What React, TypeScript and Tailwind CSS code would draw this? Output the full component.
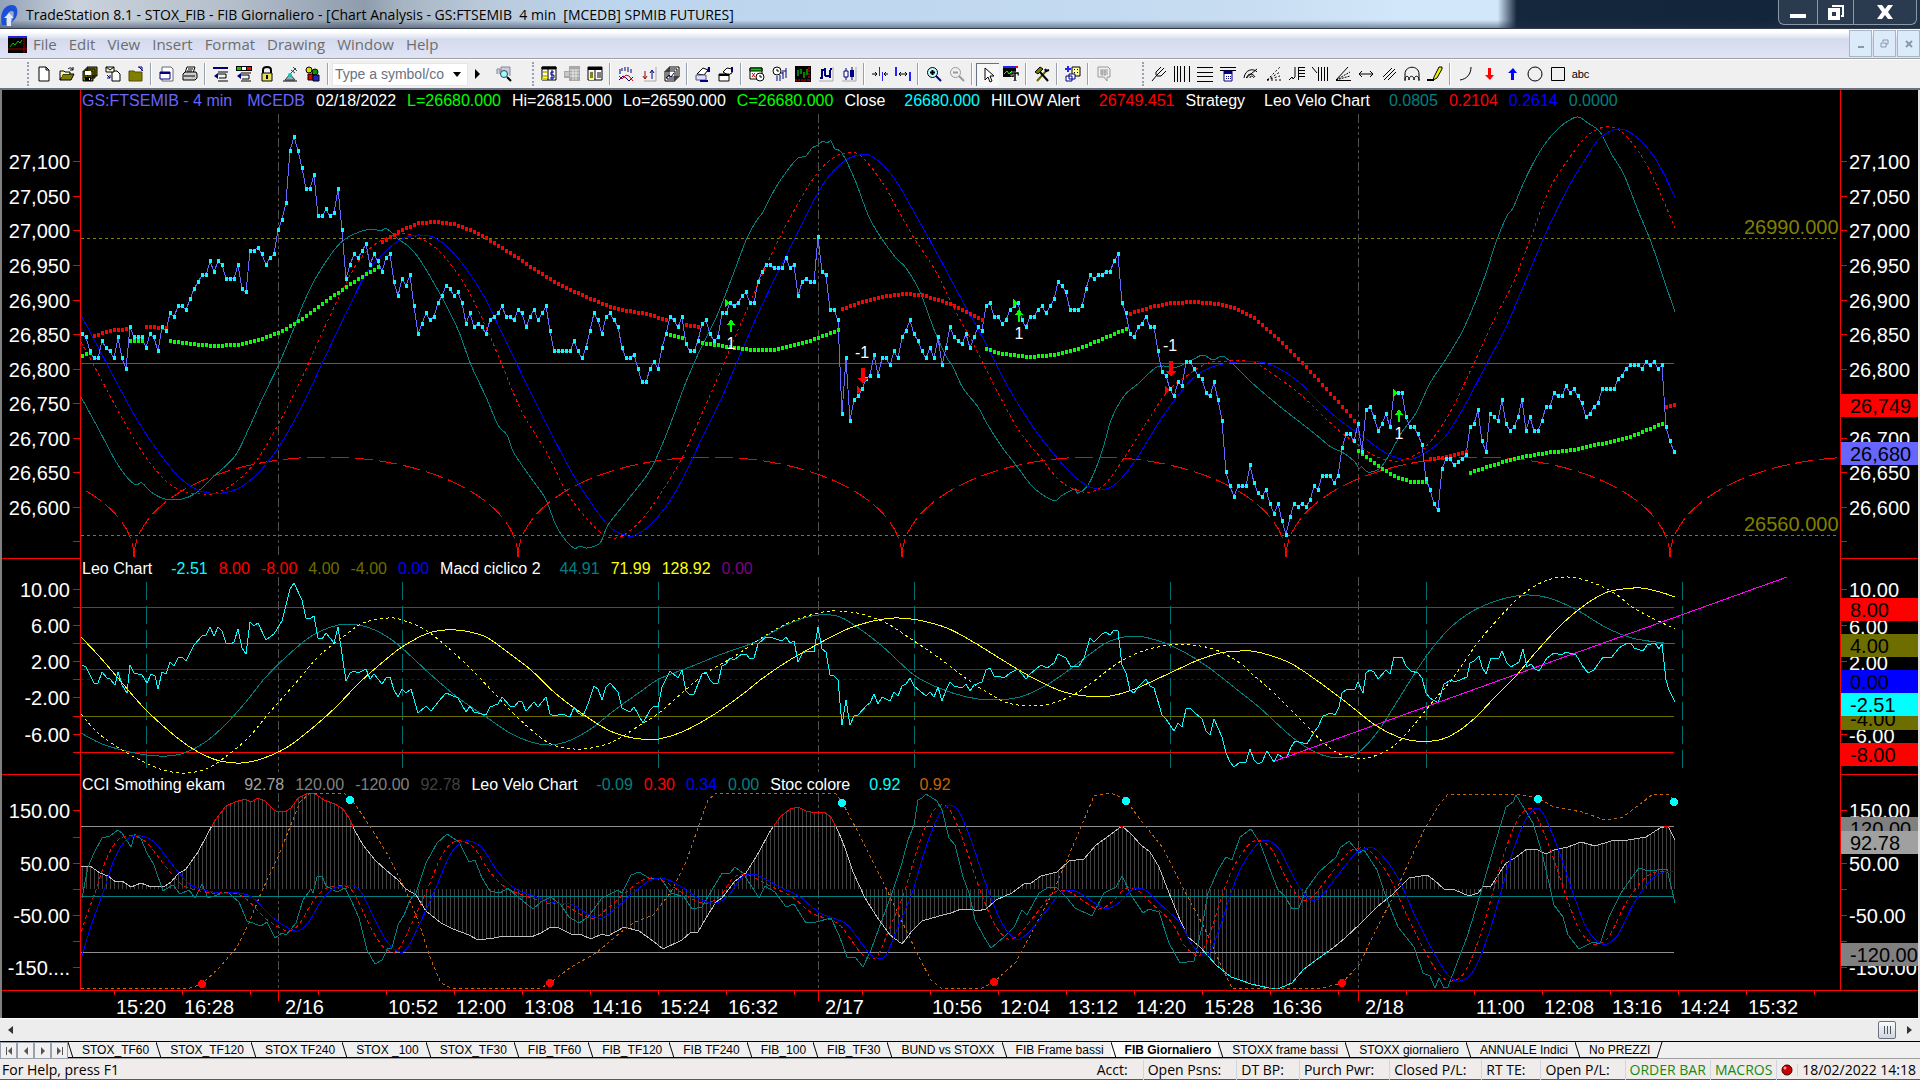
import type { ReactNode } from "react";

// ---------------------------------------------------------------- data

// closing prices, one per 4 minute bar, minus 26000
const closes = [
  850, 845, 825, 815, 815, 840, 830, 825, 815, 845,
  815, 800, 860, 845, 845, 845, 830, 850, 845, 825,
  860, 855, 880, 875, 890, 890, 885, 900, 915, 925,
  935, 935, 955, 940, 955, 950, 930, 930, 930, 950,
  915, 910, 970, 970, 975, 965, 950, 960, 965, 1000,
  1015, 1040, 1115, 1135, 1115, 1090, 1060, 1060, 1080, 1020,
  1020, 1030, 1020, 1025, 1060, 1000, 930, 950, 965, 960,
  970, 980, 950, 965, 955, 940, 960, 965, 925, 905,
  930, 920, 935, 890, 850, 865, 880, 870, 875, 895,
  905, 920, 915, 905, 910, 895, 865, 880, 860, 865,
  860, 850, 870, 875, 880, 890, 875, 875, 870, 885,
  880, 860, 875, 885, 870, 880, 890, 855, 825, 825,
  825, 825, 825, 840, 825, 815, 830, 855, 880, 870,
  850, 875, 880, 870, 860, 830, 815, 815, 820, 800,
  780, 780, 800, 810, 800, 830, 850, 875, 870, 860,
  875, 835, 825, 825, 840, 865, 870, 850, 840, 845,
  880, 880, 895, 890, 895, 905, 910, 895, 895, 925,
  940, 950, 950, 945, 945, 945, 960, 945, 950, 905,
  925, 930, 925, 925, 990, 940, 935, 885, 885, 870,
  735, 815, 725, 755, 760, 770, 785, 790, 820, 790,
  815, 815, 805, 825, 815, 845, 855, 870, 850, 840,
  825, 815, 830, 815, 845, 805, 830, 860, 845, 840,
  835, 850, 830, 845, 860, 855, 890, 895, 875, 875,
  865, 870, 885, 890, 895, 870, 860, 875, 875, 885,
  890, 880, 890, 900, 925, 920, 910, 885, 885, 885,
  890, 915, 935, 930, 935, 935, 940, 940, 955, 965,
  895, 880, 850, 845, 860, 865, 875, 860, 860, 825,
  795, 790, 770, 760, 780, 775, 810, 810, 800, 790,
  785, 765, 760, 780, 755, 725, 650, 630, 615, 630,
  630, 630, 660, 635, 620, 615, 625, 605, 590, 605,
  580, 560, 585, 605, 600, 605, 600, 610, 630, 625,
  645, 645, 645, 635, 645, 685, 705, 705, 695, 720,
  680, 740, 745, 730, 710, 720, 735, 715, 765, 765,
  765, 730, 715, 715, 705, 690, 640, 625, 605, 595,
  655, 670, 670, 660, 665, 670, 675, 715, 720, 740,
  695, 680, 735, 730, 725, 755, 720, 710, 715, 730,
  755, 710, 730, 710, 710, 725, 745, 745, 765, 760,
  760, 775, 765, 770, 760, 750, 730, 735, 745, 750,
  770, 770, 770, 770, 785, 790, 800, 805, 805, 805,
  800, 810, 805, 810, 800, 805, 715, 695, 680,
];

const hilowRed = [
  "91,337 108,331 127,329",
  "146,327 167,328",
  "382,242 402,230 418,223 435,222 453,224 469,230 486,238 510,253 535,270 559,285 584,296 608,306 622,310 645,314 667,320",
  "684,325 700,327",
  "842,309 865,301 886,296 902,294 922,295 947,303 967,312 983,320",
  "1129,314 1151,307 1171,303 1196,302 1220,304 1239,310 1255,319 1278,339 1301,362 1324,387 1343,408 1356,423",
  "1430,459 1448,457 1468,451",
  "1665,407 1676,404",
];

const hilowGreen = [
  "81,356 90,353",
  "129,341 144,341",
  "169,341 190,344 214,346 237,345 261,339 282,331 302,319 322,304 343,289 363,276 380,266",
  "669,335 684,338",
  "701,343 722,346 751,350 775,350 800,344 820,337 841,329",
  "986,349 1002,354 1029,357 1053,355 1078,349 1102,339 1128,328",
  "1358,451 1368,459 1382,469 1398,478 1411,482 1428,482",
  "1469,473 1490,466 1517,458 1545,453 1572,450 1600,444 1632,436 1664,423",
];

const velo = {
  fast:
    "81,397 98,428 118,465 134,484 142,483 151,492 165,499 182,499 196,493 212,478 235,456 249,428 263,397 278,366 292,333 304,302 318,274 335,249 345,239 359,232 373,229 380,231 387,229 398,239 408,246 418,257 431,278 445,303 459,332 471,365 486,397 498,425 507,435 514,453 531,478 545,498 555,523 563,537 574,548 580,546 587,548 600,543 608,525 626,502 649,472 662,445 673,417 686,382 700,350 716,318 731,280 747,238 757,220 763,212 776,187 790,167 798,158 806,156 812,148 818,145 823,141 827,143 831,141 835,149 842,153 855,180 869,217 882,239 896,258 906,268 920,292 935,332 947,358 953,367 963,388 978,407 986,422 1002,447 1016,465 1031,485 1043,495 1055,501 1061,496 1075,489 1078,493 1088,485 1098,463 1106,438 1111,420 1124,396 1139,383 1155,368 1163,366 1177,367 1192,360 1203,355 1213,360 1222,356 1231,362 1251,382 1278,405 1310,430 1331,447 1342,452 1354,461 1359,468 1362,467 1368,472 1379,469 1388,457 1402,432 1416,413 1430,383 1444,362 1462,332 1476,300 1487,270 1496,242 1507,216 1513,208 1524,182 1536,158 1547,141 1559,128 1568,121 1578,117 1588,123 1600,132 1611,153 1624,175 1639,213 1651,242 1664,280 1675,312",
  mid:
    "81,342 92,362 122,418 143,453 163,478 180,490 200,494 216,493 237,481 257,460 278,425 300,382 322,333 345,285 361,258 380,241 402,234 420,238 441,253 465,285 486,327 502,365 522,412 547,453 567,493 588,520 604,535 616,538 627,533 643,518 661,493 682,458 700,418 718,377 739,328 759,282 775,247 796,207 816,175 833,158 847,153 861,156 882,182 898,210 914,238 935,270 955,310 975,347 998,393 1020,432 1041,458 1057,478 1073,489 1090,492 1106,483 1126,455 1147,422 1167,392 1188,375 1208,363 1229,361 1253,362 1274,375 1301,395 1324,417 1342,433 1361,447 1377,457 1398,461 1418,453 1434,437 1453,407 1474,363 1494,320 1513,283 1531,237 1549,190 1568,160 1586,137 1605,127 1623,133 1644,160 1660,193 1675,228",
  slow:
    "81,315 98,347 118,385 139,423 163,458 180,478 200,491 222,493 241,487 261,470 282,442 304,402 326,355 351,303 367,272 384,253 400,240 418,235 437,239 457,257 482,293 502,333 526,383 551,433 575,478 596,510 612,529 628,536 635,535 647,528 665,508 682,480 702,438 722,397 743,348 763,303 784,260 808,212 824,183 843,162 859,155 873,157 894,178 914,212 939,257 963,302 984,340 1008,387 1033,427 1053,453 1073,475 1090,487 1106,489 1120,480 1139,455 1159,422 1180,393 1196,376 1212,367 1237,362 1260,362 1278,368 1299,382 1319,402 1342,422 1361,435 1384,452 1407,460 1425,453 1444,438 1464,407 1485,367 1506,327 1526,280 1545,235 1568,188 1586,158 1600,138 1618,129 1634,135 1655,158 1675,197",
};

const leo =
  "82,665 86,667 94,683 98,683 102,672 107,678 110,679 115,685 118,672 122,685 127,693 130,665 134,673 142,675 147,683 151,674 155,676 158,689 162,672 166,674 170,662 174,666 178,658 182,657 186,661 194,645 202,636 206,635 210,627 214,636 218,627 222,631 226,643 231,644 234,642 238,629 242,648 246,654 250,622 254,626 258,623 266,640 274,634 282,621 286,605 290,589 294,583 302,600 306,618 310,619 314,616 318,638 322,639 326,633 334,643 338,627 346,681 350,673 354,671 358,673 366,669 370,679 374,674 382,684 386,678 390,677 394,690 398,697 402,689 406,693 411,689 418,713 426,706 431,711 439,701 446,693 458,698 466,712 470,706 474,712 486,715 490,707 498,704 502,697 510,706 514,707 519,701 522,702 526,711 534,702 538,707 546,697 550,714 554,716 562,714 570,717 574,707 578,713 583,716 588,704 594,686 598,689 602,700 606,687 610,683 618,692 622,708 630,712 634,707 643,723 650,710 654,706 658,707 662,687 670,671 678,678 682,670 686,691 690,695 694,694 702,674 706,672 710,680 714,684 718,683 722,666 726,664 730,658 734,660 742,654 746,654 750,659 754,658 758,644 766,637 770,637 782,641 786,637 790,643 794,641 798,662 802,654 806,651 814,652 818,627 822,649 826,652 830,675 834,676 838,680 842,725 846,700 850,725 854,716 858,715 867,705 870,703 874,694 878,704 882,697 890,701 894,692 898,696 902,686 906,684 910,678 914,686 926,696 930,692 934,697 938,687 942,701 946,690 950,682 954,686 962,688 966,684 970,691 974,685 982,682 986,670 990,668 994,676 998,676 1004,678 1010,673 1018,669 1026,679 1030,674 1041,665 1047,668 1054,663 1058,654 1066,658 1071,667 1079,666 1084,658 1090,638 1094,642 1102,634 1106,632 1110,635 1114,630 1118,631 1122,665 1126,673 1130,690 1134,693 1138,687 1146,679 1150,686 1154,688 1162,715 1166,719 1174,731 1178,723 1182,727 1186,709 1190,708 1194,712 1202,719 1206,731 1210,735 1214,719 1218,728 1222,737 1226,753 1230,762 1234,767 1240,762 1246,762 1250,749 1254,760 1258,764 1262,762 1267,751 1274,762 1278,754 1282,757 1287,757 1291,747 1295,741 1307,744 1314,732 1318,727 1323,716 1331,713 1335,715 1339,707 1342,693 1347,689 1355,689 1358,682 1363,693 1366,673 1370,670 1374,672 1378,679 1386,670 1390,674 1394,657 1402,657 1406,666 1411,671 1418,673 1422,678 1426,693 1430,698 1438,703 1444,684 1451,680 1455,682 1467,677 1470,663 1474,661 1479,656 1482,667 1486,674 1491,658 1499,658 1502,651 1507,663 1511,667 1519,662 1523,649 1527,667 1531,664 1535,669 1539,671 1547,658 1554,653 1562,655 1566,652 1576,655 1582,665 1588,673 1594,670 1603,657 1611,658 1619,648 1627,643 1631,643 1634,648 1643,651 1647,645 1655,643 1659,649 1662,644 1666,680 1669,690 1675,702";

const macd = {
  teal:
    "81,733 102,744 126,751 146,755 167,756 184,753 204,743 224,726 245,703 265,678 286,657 310,637 331,627 347,624 367,627 386,636 402,648 429,673 457,697 486,717 510,733 531,742 551,745 571,740 592,728 616,709 640,692 659,679 690,667 722,654 755,642 784,626 812,616 837,616 857,627 882,646 914,675 939,688 967,697 992,700 1020,697 1045,686 1069,670 1090,654 1110,641 1135,636 1159,641 1184,652 1208,667 1240,692 1260,708 1292,737 1315,752 1338,758 1359,752 1379,730 1398,700 1425,658 1448,630 1471,612 1499,600 1526,595 1549,598 1577,610 1605,627 1632,638 1664,643 1675,644",
  dashed:
    "81,714 98,733 122,750 146,763 167,771 188,773 208,768 228,755 249,737 269,713 294,685 318,657 343,637 363,623 388,618 402,620 424,629 445,645 469,667 494,693 518,718 547,742 567,748 584,749 604,745 620,738 640,725 659,713 682,693 706,673 735,656 763,637 788,623 818,613 839,611 861,614 886,623 914,641 939,658 967,679 988,693 1008,703 1033,706 1053,703 1073,695 1094,681 1118,663 1143,651 1170,645 1192,645 1216,650 1240,663 1251,673 1274,693 1301,720 1324,743 1342,755 1365,758 1388,750 1407,733 1430,705 1453,678 1476,645 1499,618 1522,595 1545,581 1568,577 1591,582 1614,593 1637,610 1675,629",
  solid:
    "81,637 98,655 118,678 146,710 180,740 200,753 220,761 241,763 261,759 286,748 310,730 335,708 359,683 384,661 402,647 426,634 445,630 465,631 486,637 506,651 531,670 555,693 584,715 608,730 624,736 641,739 659,739 682,732 710,717 739,697 763,678 788,661 818,644 845,630 869,622 894,618 918,620 947,628 975,643 1004,661 1033,678 1061,691 1086,696 1110,696 1135,689 1170,673 1196,661 1220,653 1240,651 1251,651 1269,655 1292,664 1319,682 1347,703 1375,725 1398,737 1416,741 1439,740 1457,732 1476,717 1494,698 1515,677 1536,652 1559,627 1582,607 1605,593 1623,589 1641,588 1660,592 1675,597",
};

const cci =
  "81,866 90,866 100,873 108,876 116,882 122,881 131,887 141,883 151,887 165,886 171,882 178,874 186,869 198,852 206,837 214,822 226,806 235,802 245,799 251,802 258,798 265,801 274,810 278,812 286,811 291,808 298,798 306,794 314,793 324,800 335,804 343,809 349,818 355,831 363,845 375,860 386,870 398,880 406,889 416,895 426,911 441,923 453,929 469,935 478,940 494,938 504,936 531,937 541,933 551,927 559,928 571,934 582,935 591,939 602,934 608,936 624,927 639,931 653,941 663,949 682,940 690,933 698,932 706,918 716,902 722,898 735,881 746,873 759,852 769,833 780,817 790,809 798,807 806,811 816,813 824,812 831,817 839,833 845,848 853,872 865,898 877,917 890,935 902,944 912,931 922,921 939,916 951,913 961,909 971,909 977,911 986,909 996,900 1012,893 1024,884 1031,883 1041,876 1057,872 1069,861 1084,859 1096,845 1110,835 1122,826 1131,834 1141,845 1150,852 1159,867 1169,893 1180,920 1188,937 1200,947 1216,965 1231,977 1240,980 1251,984 1269,988 1280,988 1292,983 1303,970 1319,958 1333,948 1345,938 1361,923 1377,907 1393,894 1402,885 1409,878 1427,875 1434,880 1444,889 1455,890 1469,896 1478,893 1483,887 1491,886 1506,863 1515,858 1527,849 1538,850 1546,854 1554,850 1568,847 1581,842 1595,846 1611,841 1628,840 1646,837 1660,828 1668,826 1675,840";

const stoc =
  "81,988 190,988 202,984 220,967 237,947 249,923 261,893 278,857 290,827 300,802 310,793 345,794 355,804 371,828 388,855 404,887 418,920 431,960 441,983 451,988 541,988 550,983 571,967 596,953 620,933 633,923 653,915 671,892 686,862 698,828 708,800 716,793 835,793 842,802 857,830 877,870 898,913 918,955 931,980 941,988 982,988 994,982 1016,962 1033,930 1053,892 1069,855 1084,820 1094,796 1110,793 1124,798 1143,823 1163,848 1184,890 1204,927 1220,963 1232,988 1322,988 1342,983 1359,965 1375,932 1393,897 1409,862 1425,828 1439,805 1448,794 1517,794 1538,798 1554,807 1582,812 1605,820 1623,817 1639,805 1653,794 1668,794 1675,802";

const velo2 = {
  fast:
    "82,898 88,867 94,853 102,838 110,836 118,830 122,833 131,847 135,834 141,839 147,853 154,865 163,891 173,885 180,894 189,890 195,898 202,884 208,898 220,894 228,892 233,897 239,902 247,921 261,926 267,922 275,938 282,933 286,935 296,923 303,900 311,889 313,893 317,877 322,876 326,886 337,892 345,888 351,900 359,918 367,950 375,964 382,960 388,948 392,948 398,925 404,915 410,900 416,893 426,863 437,843 447,834 453,838 459,842 469,862 475,860 482,878 490,891 500,893 508,888 518,897 533,909 541,902 551,897 561,905 569,917 579,923 588,917 602,898 618,890 622,893 631,875 639,872 649,878 661,879 671,893 684,897 692,909 702,907 712,890 722,873 730,873 735,867 743,873 759,898 765,886 775,892 786,907 794,904 806,923 816,922 831,918 839,935 847,957 855,957 863,967 871,950 882,920 892,893 902,863 908,840 914,825 918,800 922,798 926,794 937,801 942,810 949,838 955,845 963,877 969,893 975,920 984,937 991,948 1004,937 1014,927 1022,910 1027,915 1039,893 1049,887 1057,888 1067,898 1075,908 1092,916 1104,893 1116,887 1122,876 1131,895 1143,913 1149,909 1159,912 1169,943 1180,963 1194,961 1202,927 1208,893 1218,870 1226,857 1232,860 1240,837 1251,829 1260,843 1269,867 1278,890 1285,896 1292,909 1299,908 1306,890 1319,872 1336,857 1340,848 1349,841 1359,853 1364,850 1377,870 1386,897 1398,927 1414,947 1423,973 1430,976 1435,988 1439,978 1444,988 1448,987 1457,963 1467,937 1480,895 1494,847 1506,807 1513,802 1516,795 1522,805 1533,823 1542,853 1554,905 1563,917 1568,935 1579,949 1593,942 1600,944 1609,917 1621,893 1630,880 1639,868 1648,871 1667,869 1675,903",
  slow:
    "81,959 92,923 104,890 114,860 126,840 141,836 155,843 171,863 188,883 200,889 220,893 239,893 253,898 273,918 290,929 298,931 308,923 322,900 335,888 353,886 363,895 375,920 388,943 400,952 408,947 420,923 435,890 449,857 459,844 469,841 482,848 498,872 514,888 531,895 555,903 571,904 588,914 602,918 616,908 633,893 649,881 661,878 673,882 686,890 702,900 716,903 729,895 741,878 753,874 763,878 780,887 800,897 820,913 845,923 857,937 869,953 877,958 886,955 898,927 912,893 926,847 939,815 949,805 959,812 971,840 988,890 1002,923 1016,939 1029,932 1047,910 1061,893 1075,891 1090,900 1106,909 1120,902 1133,889 1145,890 1159,903 1180,923 1192,945 1204,955 1210,952 1220,927 1231,893 1240,870 1251,852 1260,842 1269,841 1280,850 1294,878 1308,898 1319,898 1338,875 1356,853 1368,848 1379,852 1398,878 1416,918 1434,953 1448,975 1460,981 1474,970 1490,930 1508,867 1522,827 1533,810 1542,812 1556,843 1572,890 1586,927 1598,942 1607,944 1618,935 1634,903 1651,880 1664,872 1675,872",
};

// ---------------------------------------------------------------- helpers

const barX = (i: number) => 82 + i * 4;
const priceY = (p: number) => 161 + (1100 - p) * 0.692;

const parse = (s: string) => s.split(" ").map((p) => p.split(",").map(Number));

// smooth path through all points (Catmull-Rom)
const smooth = (s: string) => {
  const p = parse(s);
  let d = `M${p[0][0]} ${p[0][1]}`;
  for (let i = 0; i < p.length - 1; i++) {
    const a = p[i - 1] || p[i];
    const b = p[i];
    const c = p[i + 1];
    const e = p[i + 2] || c;
    d += `C${b[0] + (c[0] - a[0]) / 6} ${b[1] + (c[1] - a[1]) / 6} ${c[0] - (e[0] - b[0]) / 6} ${c[1] - (e[1] - b[1]) / 6} ${c[0]} ${c[1]}`;
  }
  return d;
};

const valueAt = (pts: number[][], x: number) => {
  const i = Math.max(1, pts.findIndex((p) => p[0] >= x));
  const [x0, y0] = pts[i - 1];
  const [x1, y1] = pts[i];
  return y0 + ((y1 - y0) * (x - x0)) / (x1 - x0);
};

// one small square per bar along a series
const squares = (s: string) => {
  const pts = parse(s);
  const end = pts[pts.length - 1][0];
  let d = "";
  for (let i = 0; barX(i) <= end; i++) {
    const x = barX(i);
    if (x >= pts[0][0]) d += `M${x - 1} ${Math.round(valueAt(pts, x)) - 2}h3v4h-3z`;
  }
  return d;
};

const cciPoints = parse(cci);
const dayLines = [278, 818, 1358];

const Line = ({ d, c, dash }: { d: string; c: string; dash?: string }) => (
  <path d={d} fill="none" stroke={c} strokeDasharray={dash} />
);

const DayLines = ({ from, to }: { from: number; to: number }) => (
  <>
    {dayLines.map((x) => (
      <Line key={x} d={`M${x + 0.5} ${from}V${to}`} c="#505050" dash="9 3 3 3 3 3" />
    ))}
  </>
);

type Tick = [number, string];

// price or value scale on both sides of a pane
const Scale = ({ left, right = left, top, bottom }: { left: Tick[]; right?: Tick[]; top: number; bottom: number }) => (
  <g>
    <path d={`M80.5 ${top}V${bottom}M1840.5 ${top}V${bottom}`} stroke="#f00" />
    {left.map(([y, t]) => (
      <g key={y}>
        <path d={`M73 ${y}H80M1841 ${y}H1847`} stroke="#f00" />
        {t && <text x="70" y={y + 7} textAnchor="end">{t}</text>}
      </g>
    ))}
    {right.map(([y, t]) => t && <text key={y} x="1849" y={y + 7}>{t}</text>)}
  </g>
);

const Tag = ({ y, c, children }: { y: number; c: string; children: ReactNode }) => (
  <g>
    <rect x="1841" y={y} width="77" height="23" fill={c} />
    <text x="1850" y={y + 19} fill="#000">{children}</text>
  </g>
);

const Pane = ({ top, height, legend, children }: { top: number; height: number; legend?: ReactNode; children: ReactNode }) => (
  <div className="relative">
    <svg viewBox={`2 ${top} 1916 ${height}`} shapeRendering="crispEdges" className="block w-full h-auto fill-white text-[20px]">
      {children}
    </svg>
    {legend && (
      <div className="absolute top-0 left-20 h-[21px] flex items-center gap-[11px] text-base leading-5 whitespace-pre text-white">{legend}</div>
    )}
  </div>
);

const Legend = ({ name, values = [] }: { name: string; values?: [string, string][] }) => (
  <>
    <span className="pr-2">{name}</span>
    {values.map(([v, c], i) => (
      <span key={i} className={c}>{v}</span>
    ))}
  </>
);

// ---------------------------------------------------------------- panes

const BuySignal = ({ x, y }: { x: number; y: number }) => (
  <g fill="#0f0">
    <path d={`M${x} ${y}l4 6h-3v7h-2v-7h-3z`} />
    <text x={x} y={y + 30} textAnchor="middle" className="text-base fill-white">1</text>
  </g>
);

const SellSignal = ({ x, y }: { x: number; y: number }) => (
  <g fill="#f00">
    <path d={`M${x - 2} ${y}h4v10h3l-5 6l-5 -6h3z`} />
    <text x={x - 8} y={y - 10} className="text-base fill-white">-1</text>
  </g>
);

const PricePane = () => {
  const ticks: Tick[] = [
    [161.5, "27,100"], [196.5, "27,050"], [230.5, "27,000"], [265.5, "26,950"], [300.5, "26,900"], [334.5, "26,850"],
    [369.5, "26,800"], [403.5, "26,750"], [438.5, "26,700"], [472.5, "26,650"], [507.5, "26,600"], [541.5, ""],
  ];
  return (
    <Pane
      top={90}
      height={468}
      legend={
        <>
          <span className="text-[#6666ff] pr-1">GS:FTSEMIB - 4 min</span>
          <span className="text-[#6666ff]">MCEDB</span>
          <span>02/18/2022</span>
          <span className="text-[#00ff00]">L=26680.000</span>
          <span>Hi=26815.000</span>
          <span>Lo=26590.000</span>
          <span className="text-[#00ff00]">C=26680.000</span>
          <Legend name="Close" values={[["26680.000", "text-[#00ffff]"]]} />
          <Legend name="HILOW Alert" values={[["26749.451", "text-[#ff0000]"]]} />
          <Legend name="Strategy" />
          <Legend
            name="Leo Velo Chart"
            values={[["0.0805", "text-[#008080]"], ["0.2104", "text-[#ff0000]"], ["0.2614", "text-[#0000ff]"], ["0.0000", "text-[#008080]"]]}
          />
        </>
      }
    >
      <clipPath id="price-plot"><rect x="81" y="90" width="1758" height="468" /></clipPath>
      <DayLines from={114} to={556} />
      <Line d="M81 238.5H1838M81 535.5H1838" c="#808000" dash="3 3" />
      <Line d="M81 363.5H1674" c="#008080" />
      <g clipPath="url(#price-plot)">
        {[-250, 134, 518, 902, 1286, 1670].map((x) => (
          <Line key={x} d={`M${x} 557A192 100 0 0 1 ${x + 384} 557`} c="#f00" dash="18 6" />
        ))}
      </g>
      <Line d={smooth(velo.fast)} c="#008080" />
      <Line d={smooth(velo.mid)} c="#f00" dash="3 3" />
      <Line d={smooth(velo.slow)} c="#00f" />
      <Line d={"M" + closes.map((p, i) => `${barX(i)} ${priceY(p)}`).join("L")} c="#6666ff" />
      {hilowRed.map((s) => <path key={s} d={squares(s)} fill="#f00" />)}
      {hilowGreen.map((s) => <path key={s} d={squares(s)} fill="#0f0" />)}
      {closes.map((p, i) => (
        <rect key={i} x={barX(i) - 1} y={Math.round(priceY(p)) - 2} width="3" height="4" fill="#0ff" />
      ))}
      <path d="M725 299v8l5 -4zM1013 299v8l5 -4zM1393 389v8l5 -4z" fill="#0f0" />
      <path d="M857 386v8l4 -4zM1165 386v8l4 -4z" fill="#f00" />
      <BuySignal x={731} y={319} />
      <BuySignal x={1019} y={309} />
      <BuySignal x={1399} y={409} />
      <SellSignal x={863} y={368} />
      <SellSignal x={1171} y={361} />
      <text x="1744" y="234" fill="#808000">26990.000</text>
      <text x="1744" y="531" fill="#808000">26560.000</text>
      <Scale left={ticks} top={90} bottom={558} />
      <Tag y={394} c="#f00">26,749</Tag>
      <Tag y={442} c="#6666ff">26,680</Tag>
    </Pane>
  );
};

const LeoPane = () => {
  const ticks: Tick[] = [
    [589.5, "10.00"], [607.5, ""], [625.5, "6.00"], [643.5, ""], [661.5, "2.00"], [679.5, ""],
    [697.5, "-2.00"], [716.5, ""], [734.5, "-6.00"], [752.5, ""],
  ];
  const right: Tick[] = [[589.5, "10.00"], [626.5, "6.00"], [662.5, "2.00"], [735.5, "-6.00"]];
  return (
    <Pane
      top={558}
      height={216}
      legend={
        <>
          <Legend
            name="Leo Chart"
            values={[
              ["-2.51", "text-[#00ffff]"], ["8.00", "text-[#ff0000]"], ["-8.00", "text-[#ff0000]"],
              ["4.00", "text-[#6e6e00]"], ["-4.00", "text-[#6e6e00]"], ["0.00", "text-[#0000ff]"],
            ]}
          />
          <Legend
            name="Macd ciclico 2"
            values={[["44.91", "text-[#008080]"], ["71.99", "text-[#ffff00]"], ["128.92", "text-[#ffff00]"], ["0.00", "text-[#800080]"]]}
          />
        </>
      }
    >
      <DayLines from={577} to={772} />
      {[146, 402, 658, 914, 1170, 1426, 1682].map((x) => (
        <Line key={x} d={`M${x + 0.5} 582V768`} c="#007070" dash="18 6" />
      ))}
      <Line d="M81 607.5H1674M81 752.5H1674" c="#f00" />
      <Line d="M81 643.5H1674M81 716.5H1674" c="#6e6e00" />
      <Line d="M81 669.5H1674" c="#900090" />
      <Line d="M81 679.5H1674" c="#00f" dash="3 3" />
      <Line d={smooth(macd.teal)} c="#008080" />
      <Line d={smooth(macd.dashed)} c="#ff0" dash="3 3" />
      <Line d={smooth(macd.solid)} c="#ff0" />
      <Line d={"M" + leo} c="#0ff" />
      <Line d="M1275 761L1787 577" c="#f0f" />
      <Scale left={ticks} right={right} top={558} bottom={774} />
      <Tag y={598} c="#f00">8.00</Tag>
      <Tag y={634} c="#6e6e00">4.00</Tag>
      <Tag y={707} c="#6e6e00">-4.00</Tag>
      <Tag y={670} c="#00f">0.00</Tag>
      <Tag y={693} c="#0ff">-2.51</Tag>
      <Tag y={743} c="#f00">-8.00</Tag>
      <path d="M2 558.5H80M1841 558.5H1918" stroke="#f00" />
    </Pane>
  );
};

const CciPane = () => {
  const left: Tick[] = [
    [810.5, "150.00"], [837.5, ""], [863.5, "50.00"], [889.5, ""], [915.5, "-50.00"], [941.5, ""], [967.5, "-150...."],
  ];
  const right: Tick[] = [[810.5, "150.00"], [863.5, "50.00"], [915.5, "-50.00"], [967.5, "-150.00"]];
  const bars = Array.from({ length: 399 }, (_, i) => `M${barX(i) + 0.5} 889V${valueAt(cciPoints, barX(i))}`).join("");
  return (
    <Pane
      top={774}
      height={216}
      legend={
        <>
          <Legend
            name="CCI Smothing ekam"
            values={[["92.78", "text-[#a0a0a0]"], ["120.00", "text-[#808080]"], ["-120.00", "text-[#808080]"], ["92.78", "text-[#404040]"]]}
          />
          <Legend
            name="Leo Velo Chart"
            values={[["-0.09", "text-[#008080]"], ["0.30", "text-[#ff0000]"], ["0.34", "text-[#0000ff]"], ["0.00", "text-[#008080]"]]}
          />
          <Legend name="Stoc colore" values={[["0.92", "text-[#00ffff] pr-2"], ["0.92", "text-[#c86400]"]]} />
        </>
      }
    >
      <clipPath id="cci-plot"><rect x="81" y="774" width="1600" height="216" /></clipPath>
      <clipPath id="cci-high"><rect x="81" y="774" width="1600" height="53" /></clipPath>
      <clipPath id="cci-mid"><rect x="81" y="827" width="1600" height="125" /></clipPath>
      <clipPath id="cci-low"><rect x="81" y="952" width="1600" height="38" /></clipPath>
      <path d={bars} stroke="#404040" />
      <DayLines from={793} to={988} />
      <Line d="M81 826.5H1674M81 952.5H1674" c="#909090" />
      <Line d="M81 896.5H1674" c="#008080" />
      <g clipPath="url(#cci-high)"><Line d={"M" + cci} c="#f00" /></g>
      <g clipPath="url(#cci-mid)"><Line d={"M" + cci} c="#c0c0c0" /></g>
      <g clipPath="url(#cci-low)"><Line d={"M" + cci} c="#0ff" /></g>
      <Line d={"M" + stoc} c="#c86400" dash="3 3" />
      <Line d={"M" + velo2.fast} c="#008080" />
      <g clipPath="url(#cci-plot)">
        <g transform="translate(-8 0)">
          <Line d={smooth(velo2.slow)} c="#f00" dash="4 3" />
        </g>
      </g>
      <Line d={smooth(velo2.slow)} c="#00f" />
      {[[350, 800], [842, 803], [1126, 801], [1538, 799], [1674, 802]].map(([x, y]) => (
        <circle key={x} cx={x} cy={y} r="4" fill="#0ff" />
      ))}
      {[[202, 984], [550, 983], [994, 982], [1342, 983]].map(([x, y]) => (
        <circle key={x} cx={x} cy={y} r="4" fill="#f00" />
      ))}
      <Scale left={left} right={right} top={774} bottom={990} />
      <Tag y={817} c="#808080">120.00</Tag>
      <Tag y={831} c="#a0a0a0">92.78</Tag>
      <Tag y={943} c="#808080">-120.00</Tag>
      <path d="M2 774.5H80M1841 774.5H1918" stroke="#f00" />
    </Pane>
  );
};

const TimeAxis = () => {
  const labels: [number, string][] = [
    [116, "15:20"], [184, "16:28"], [285, "2/16"], [388, "10:52"], [456, "12:00"], [524, "13:08"], [592, "14:16"],
    [660, "15:24"], [728, "16:32"], [825, "2/17"], [932, "10:56"], [1000, "12:04"], [1068, "13:12"], [1136, "14:20"],
    [1204, "15:28"], [1272, "16:36"], [1365, "2/18"], [1476, "11:00"], [1544, "12:08"], [1612, "13:16"], [1680, "14:24"], [1748, "15:32"],
  ];
  return (
    <Pane top={990} height={28}>
      <g stroke="#f00">
        <path d="M2 990.5H1918" />
        {Array.from({ length: 26 }, (_, i) => <path key={i} d={`M${114.5 + i * 68} 991v4`} />)}
        {dayLines.map((x) => <path key={x} d={`M${x + 0.5} 991v10`} />)}
      </g>
      {labels.map(([x, t]) => <text key={x} x={x} y="1014">{t}</text>)}
    </Pane>
  );
};

// ---------------------------------------------------------------- toolbar

const K = "#000";
const N = "#000080";

const icons: Record<string, ReactNode> = {
  "New": <path d="M3 1h7l3 3v11H3zM10 1v3h3" fill="#fff" stroke={K} />,
  "Open": <><path d="M1 14V5h4l1 1h5v2M9 3c2-2 4-1 5 1m0-3v3h-3" fill="none" stroke={K} /><path d="M1 14l3-6h11l-3 6z" fill="#808000" stroke={K} /><path d="M2 6h3v1h5v1H4l-2 4z" fill="#ff6" /></>,
  "Save All": <><path d="M5 1h10v9H5zM3 3h10v9H3zM1 5h10v10H1z" fill="#808000" stroke={K} /><path d="M3 5h6v4H3z" fill="#fff" /><path d="M3 11h6v4H3z" fill={K} /><path d="M7 12h1v2H7z" fill="#fff" /></>,
  "Send": <><path d="M7 5h5l3 3v7H7z" fill="#fff" stroke={K} /><path d="M1 1h8v5H1zl4 3l4-3" fill="#ffc" stroke={K} /><path d="M2 9l3 3m0-3v3H2" fill="none" stroke={N} /></>,
  "Close Folder": <><path d="M1 5h5l1 1h7v9H1z" fill="#808000" stroke="#554f00" /><path d="M14 5V1h-4m1 0l4 4" fill="none" stroke={N} /></>,
  "Print Preview": <><path d="M3 1h9l2 2v12H3z" fill="#fff" stroke="#667" /><path d="M1 6h10v7H1z" fill="#fff" stroke={N} /><path d="M1 6h10v2H1z" fill={N} /></>,
  "Print": <><path d="M5 1h8l-2 6H3z" fill="#fff" stroke={K} /><path d="M1 8l2-2h11l1 2v4l-2 2H1z" fill="#ccc" stroke={K} /><path d="M6 3h5M5 5h5M2 10h11" stroke={K} /><path d="M10 11h2v1h-2z" fill="#cc0" /></>,
  "Insert Row": <><path d="M0 1h15v2H0z" fill={N} /><path d="M5 6h10M5 15h10M5 8h8v4H6" fill="none" stroke={K} /><path d="M1 10l4-3v6z" fill={N} /></>,
  "Color Row": <><path d="M0 0h16v5H0z" fill={K} /><path d="M1 1h4v3H1z" fill="#0c0" /><path d="M6 1h4v3H6z" fill="#fff" /><path d="M11 1h4v3h-4z" fill="#f00" /><path d="M5 7h10M5 15h10M5 9h8v4H6" fill="none" stroke={K} /><path d="M1 10l4-3v6z" fill={N} /></>,
  "Lock": <><path d="M4 8V4c0-4 8-4 8 0v4" fill="none" stroke={K} strokeWidth="2" /><path d="M3 7h10v8H3z" fill="#e8e060" stroke={K} /><path d="M7 9h2v4H7z" fill={K} /></>,
  "Satellite": <><path d="M3 14l5-6l5 6zM8 8l6-6M9 4l4 3M11 1l4 4" fill="#9aa" stroke="#345" /><path d="M1 15h14" stroke={K} /><circle cx="8" cy="9" r="2" fill="#0cc" /></>,
  "Blocks": <><circle cx="4" cy="4" r="3" fill="#dd0" stroke={K} /><circle cx="10" cy="6" r="3" fill="#090" stroke={K} /><path d="M3 8h5v6H3z" fill="#d00" stroke={K} /><path d="M8 9h6v6H8z" fill="#22c" stroke={K} /></>,
  "Find Symbol": <><path d="M1 8V3h3v5M5 6V1h9v9" fill="#ccd" stroke="#889" /><circle cx="8" cy="8" r="3.500" fill="#9ff" stroke="#345" /><path d="M11 11l4 4" stroke={K} strokeWidth="2" /></>,
  "Account": <><path d="M1 1h14v13H1z" fill="#fff" stroke={K} /><path d="M1 1h14v2H1zM7 3v11" fill={K} stroke={K} /><path d="M2 5h4v2H2zM2 9h4v2H2zM1 12h5v2H1z" fill="#cc0" /><path d="M13 6h-3v3h3v3h-4M11 4v10" fill="none" stroke={N} /></>,
  "Quote Table": <><path d="M5 0h11v15H5zM0 5h6v7H0z" fill="#a8a8a8" /><path d="M6 4h9M6 7h9M6 10h9M9 4v10M12 4v10M1 7h4M1 9h4" stroke="#e8e8e8" /></>,
  "Columns": <><path d="M1 1h14v13H1z" fill="#fff" stroke={K} /><path d="M1 1h14v3H1z" fill={K} /><path d="M2 5h5v9H2z" fill="#ff6" /><path d="M8 4v10M3 7h3M3 9h3M3 11h3M10 7h4M10 9h4M10 11h4" stroke={K} /></>,
  "Indicator": <><path d="M2 3v5M4 2v3M7 1v4M10 1v5M13 3v4" stroke={N} /><path d="M1 14l4-4l3 2l3 3l4-4" fill="none" stroke={N} /><path d="M1 10l3 3l4-4l3 1l4 5" fill="none" stroke="#d00" /></>,
  "Arrows": <><path d="M15 1v14H3" fill="none" stroke="#aaa" /><path d="M4 5v7m-2-2l2 3l2-3" fill="none" stroke="#900" /><path d="M11 13V5m-2 2l2-3l2 3" fill="none" stroke={N} /></>,
  "Chart Stack": <><path d="M5 1h10v10H5zM3 3h10v10H3zM1 5h10v10H1z" fill="#fff" stroke={K} /><path d="M2 12l3-3l2 2l3-4" fill="none" stroke={N} /></>,
  "Format Symbol": <><path d="M2 8l6-6l5 2l-4 5z" fill="#fff" stroke={K} /><path d="M1 9h10v5H1z" fill="#ddf" stroke="#557" /><path d="M13 1h2v5h-3M5 14h8v2H5z" fill={N} /></>,
  "Format Window": <><path d="M5 6l4-4l5 1v4l-4 2z" fill="#fff" stroke={K} /><path d="M1 8h10v7H1z" fill="#fff" stroke={K} /><path d="M1 8h10v2H1z" fill={K} /><path d="M13 1h2v5h-2z" fill={N} /></>,
  "Calendar": <><path d="M1 2h12v11H1z" fill="#fff" stroke={K} /><path d="M1 2h12v3H1z" fill="#0c0" stroke={K} /><path d="M3 7l3 4M6 7l-3 4" stroke="#d00" /><circle cx="11" cy="11" r="4" fill="#fff" stroke={K} /><path d="M11 9v2h2" fill="none" stroke={K} /></>,
  "Interval": <><circle cx="5" cy="5" r="4" fill="#fff" stroke={K} /><path d="M5 3v2h2" fill="none" stroke={K} /><path d="M5 10v5M8 9v6M11 4v9M14 2v10M9 7h2M12 5h2" stroke={N} /></>,
  "Chart Style": <><path d="M0 0h16v16H0z" fill={K} /><path d="M3 4v6M6 3v5M9 6v6M12 3v6" stroke="#0f0" /><path d="M0 14h13M14 1v15" stroke="#f00" strokeDasharray="2 1" /></>,
  "Bars": <><path d="M15 1v14H1" fill="none" stroke="#aaa" /><path d="M4 3v10M7 2v8M12 4v8M2 12h2M4 4h3M7 10h5M12 3h2" stroke={N} strokeWidth="2" /></>,
  "Candles": <><path d="M15 1v14H1" fill="none" stroke="#aaa" /><path d="M5 2v12M11 1v13" stroke={N} /><path d="M3 5h4v6H3z" fill="#fff" stroke={N} /><path d="M9 4h4v7H9z" fill={N} /></>,
  "Narrow": <><path d="M7.500 1v9M10.500 6v9" stroke="#22f" /><path d="M0 8h5m-2-2l2 2l-2 2M16 8h-4m2-2l-2 2l2 2" fill="none" stroke={K} /></>,
  "Widen": <><path d="M1 1v9M15 6v9" stroke="#22f" strokeWidth="2" /><path d="M4 8h8M6 6L4 8l2 2M10 6l2 2l-2 2" fill="none" stroke={K} /></>,
  "Zoom In": <><circle cx="6.500" cy="6.500" r="5" fill="#bff" stroke={K} /><path d="M4 6.500h5M6.500 4v5" stroke={K} strokeWidth="2" /><path d="M10 10l5 5" stroke={N} strokeWidth="2" /></>,
  "Zoom Out": <><circle cx="6.500" cy="6.500" r="5" fill="none" stroke="#999" /><path d="M4 6.500h5" stroke="#999" strokeWidth="2" /><path d="M10 10l5 5" stroke="#999" strokeWidth="2" /></>,
  "Pointer": <path d="M5 1v12l3-3l2 5l2-1l-2-5h4z" fill="#fff" stroke={K} />,
  "Text Tool": <><path d="M0 1h13v10H0z" fill={K} /><path d="M0 0h13v2H0z" fill="#22f" /><path d="M13 0h2v2h-2z" fill="#f00" /><path d="M1 8l3-3l2 3l3-3" fill="none" stroke="#0f0" /><path d="M8 6h8v4h-1l-1-2h-1v6h1v1h-4v-1h1V8h-1l-1 2H8z" fill={K} stroke="#fff" strokeWidth=".5" /></>,
  "Tools": <><path d="M3 15L13 4" stroke="#660" strokeWidth="2" /><path d="M14 15L6 6" stroke={K} strokeWidth="2" /><path d="M1 6l5-5l3 2l-5 5z" fill="#770" stroke={K} /><path d="M11 3l1 2l3-1" fill="none" stroke={K} strokeWidth="2" /></>,
  "Add Analysis": <><path d="M7 1h8v9H7z" fill="#ff9" stroke={K} /><path d="M9 3h1v1H9zM12 3h1v1h-1zM9 6h1v1H9zM12 6h1v1h-1z" fill={K} /><path d="M1 10h6v5H1zM4 8h6v5H4z" fill="#fff" stroke={N} /><path d="M3 0v6M0 3h6" stroke="#22f" strokeWidth="2" /></>,
  "Comment": <path d="M2 1h10l2 2v8h-3v4l-3-4H2zM4 4h8M4 6h8M4 8h8M6 4v6M9 4v6" fill="none" stroke="#999" />,
  "Pitchfork": <path d="M1 15L6 9M5 9V6l5-5M5 9l1 1h4l5-5M6 9l7-7" fill="none" stroke={K} />,
  "Vertical Lines": <path d="M.500 0v16M3.500 0v16M6.500 0v16M10.500 0v16M15.500 0v16" stroke={K} />,
  "Horizontal Lines": <path d="M0 1.500h16M0 6.500h16M0 10.500h16M0 15.500h16" stroke={K} />,
  "Calculator": <><path d="M0 1.500h16M0 4.500h16" stroke={K} /><path d="M4 5h8v10H4z" fill="#fff" stroke={N} /><path d="M4 5h8v3H4z" fill={N} /><path d="M6 10.500h5M6 12.500h5" stroke={N} strokeDasharray="1 1" /></>,
  "Arcs": <path d="M1 12c1-9 10-10 13-6M4 12c0-5 6-5 8-1M3 12L14 3M7 12c0-3 3-2 4 0" fill="none" stroke={K} />,
  "Gann Fan": <path d="M1 14L14 1M1 14h14M1 14l13-8M1 14l13-4" fill="none" stroke={K} strokeDasharray="2 2" />,
  "Retracement": <path d="M0 14l3-3l1 2l2-2V1M9.500 1v13M10 1.500h6M10 4.500h6M10 7.500h6M10 10.500h6" fill="none" stroke={K} />,
  "Time Extension": <path d="M0 1l5 6M6.500 1v14M9.500 1v14M12.500 1v14M15.500 1v14" stroke={K} />,
  "Speed Lines": <><path d="M1 14L13 1M1 14.500h15" stroke={K} /><path d="M1 14l14-8M1 14l14-4" stroke={K} strokeDasharray="2 1" /></>,
  "Extend": <path d="M1 8h14M4 5L1 8l3 3M12 5l3 3l-3 3" fill="none" stroke={K} />,
  "Parallel Lines": <path d="M2 11L11 2M3 14L14 3M7 14l8-8" stroke={K} />,
  "Cycles": <path d="M1 15V8c0-9 14-9 14 0v7M1 14c0-5 4-5 4 0c0-5 5-5 5 0c0-5 5-5 5 0" fill="none" stroke={K} />,
  "Pencil": <><path d="M7 11l5-10h3v2l-5 9l-4 2z" fill="#ee0" stroke={K} /><path d="M0 14h7" stroke={K} strokeWidth="2" /></>,
  "Arc": <path d="M13 1c0 7-4 12-11 13" fill="none" stroke={K} />,
  "Down Arrow": <path d="M7 2h3v7h3l-4 5l-5-5h3z" fill="#f00" />,
  "Up Arrow": <path d="M7 14h3V7h3L9 2L4 7h3z" fill="#00f" />,
  "Ellipse": <circle cx="8" cy="8" r="7" fill="none" stroke={K} />,
  "Rectangle": <path d="M1.500 1.500h13v13h-13z" fill="none" stroke={K} />,
};

const Tool = ({ name }: { name: string }) => (
  <button aria-label={name} className={"w-[23px] h-[23px] shrink-0 flex items-center justify-center " + (name === "Pointer" ? "bg-[#f8f8f8] border-t border-l border-gray-500" : "")}>
    <svg viewBox="0 0 16 16" className="w-4 h-4">{icons[name]}</svg>
  </button>
);

const Sep = () => <div className="w-[2px] h-[22px] mx-[3px] shrink-0 bg-gray-400 border-r border-white" />;
const Grip = () => <div className="w-0 h-[24px] mx-[3px] shrink-0 border-l-2 border-dotted border-gray-400" />;

const Tools = ({ groups }: { groups: string[][] }) => (
  <>
    {groups.map((g, i) => (
      <div key={i} className="flex items-center">
        {i > 0 && <Sep />}
        {g.map((n) => <Tool key={n} name={n} />)}
      </div>
    ))}
  </>
);

const Toolbar = () => (
  <div className="h-[31px] flex items-center bg-[#f0f0f0] border-t border-b-2 border-t-white border-b-gray-500 shadow-[0_-1px_0_#a0a0a0]">
    <div className="flex items-center pl-6">
      <Grip />
      <Tools
        groups={[
          ["New", "Open", "Save All", "Send", "Close Folder"],
          ["Print Preview", "Print"],
          ["Insert Row", "Color Row", "Lock", "Satellite", "Blocks"],
        ]}
      />
      <Sep />
      <div className="w-[136px] h-[23px] flex items-center bg-white border border-gray-200">
        <input aria-label="Symbol" defaultValue="Type a symbol/co" className="w-[114px] pl-[2px] text-sm text-gray-500 outline-none" />
        <button aria-label="Symbol list" className="w-[20px] flex justify-center">
          <svg viewBox="0 0 8 5" className="w-2 h-[5px]"><path d="M0 0h8L4 5z" /></svg>
        </button>
      </div>
      <button aria-label="Go" className="w-5 pl-[7px]">
        <svg viewBox="0 0 5 10" className="w-[5px] h-[10px]"><path d="M0 0l5 5l-5 5z" /></svg>
      </button>
      <div className="ml-1 mr-[14px]"><Tool name="Find Symbol" /></div>
    </div>
    <div className="flex items-center">
      <Grip />
      <Tools
        groups={[
          ["Account", "Quote Table", "Columns"],
          ["Indicator", "Arrows", "Chart Stack"],
          ["Format Symbol", "Format Window"],
          ["Calendar", "Interval", "Chart Style", "Bars", "Candles"],
          ["Narrow", "Widen"],
          ["Zoom In", "Zoom Out"],
          ["Pointer", "Text Tool"],
          ["Tools"],
          ["Add Analysis"],
          ["Comment"],
        ]}
      />
    </div>
    <div className="flex items-center pl-6">
      <Grip />
      <Tools
        groups={[
          [
            "Pitchfork", "Vertical Lines", "Horizontal Lines", "Calculator", "Arcs", "Gann Fan", "Retracement",
            "Time Extension", "Speed Lines", "Extend", "Parallel Lines", "Cycles", "Pencil",
          ],
          ["Arc", "Down Arrow", "Up Arrow", "Ellipse", "Rectangle"],
        ]}
      />
      <button className="w-[23px] text-[11px] leading-4">abc</button>
    </div>
  </div>
);

// ---------------------------------------------------------------- window frame

const TitleBar = () => (
  <header className="relative h-[29px] flex justify-between border-b border-[#333c48] bg-[linear-gradient(90deg,#93a3b8_0%,#c9d2dc_4%,#b4bfcb_12%,#8e9cac_19%,#a7b4c2_21%,#b9c9da_25%,#bcd5ee_32%,#c3daf0_58%,#c9def2_66%,#d3e7fa_73%,#d3e7fa_78%,#15273c_79%,#13253a_92%,#22344a_100%)]">
    <div className="absolute inset-x-0 bottom-0 h-2 bg-linear-to-t from-[#20304880] to-transparent" />
    <div className="relative flex items-center pt-px">
      <svg viewBox="0 0 18 22" className="w-[18px] h-[22px]">
        <path d="M2 21C-1 10 4 1 12 1c6 0 7 8 3 14l-4 4c3-7 4-12 1-12c-5 0-6 7-6 14z" fill="#1b4fd8" />
        <path d="M9 9l5 5h-3v8H7v-8H4z" fill="#dfe8ff" />
      </svg>
      <h1 className="pl-2 font-['Open_Sans',sans-serif] text-sm whitespace-pre text-black">
        TradeStation 8.1 - STOX_FIB - FIB Giornaliero - [Chart Analysis - GS:FTSEMIB  4 min  [MCEDB] SPMIB FUTURES]
      </h1>
    </div>
    <div className="relative h-[25px] mr-[3px] flex border border-t-0 border-[#8b98a8] rounded-b-md divide-x divide-[#8b98a8] bg-[#2a3b50]">
      <button aria-label="Minimize" className="w-[39px] flex justify-center items-end pb-1.5">
        <span className="w-4 h-1 bg-white" />
      </button>
      <button aria-label="Restore" className="w-9 flex justify-center items-center">
        <svg viewBox="0 0 18 17" className="w-[18px] h-[17px]" fill="none" stroke="#fff" strokeWidth="4"><path d="M6 3V2h10v10h-2" strokeWidth="2" /><path d="M3 6h8v8H3z" /></svg>
      </button>
      <button aria-label="Close" className="w-[62px] flex justify-center items-center">
        <svg viewBox="0 0 16 14" className="w-4 h-[14px]"><path d="M0 0h5l3 4l3-4h5l-5 7l5 7h-5l-3-4l-3 4H0l5-7z" fill="#fff" /></svg>
      </button>
    </div>
  </header>
);

const MenuBar = () => (
  <nav className="h-[30px] flex justify-between bg-linear-to-b from-white from-10% via-[#d5dbed] via-35% to-[#e0e6f6] font-['Open_Sans',sans-serif]">
    <div className="flex items-center pl-2">
      <svg viewBox="0 0 19 17" className="w-[19px] h-[17px]">
        <path d="M0 0h19v17H0z" />
        <path d="M0 0h19v2H0z" fill="#22d" />
        <path d="M2 11l3-4l2 2l3-4l2 2l2-3" fill="none" stroke="#0c0" />
        <path d="M0 13h19M16 2v15" stroke="#a00" />
      </svg>
      {["File", "Edit", "View", "Insert", "Format", "Drawing", "Window", "Help"].map((m) => (
        <button key={m} className="px-1.5 text-[15px] leading-5 text-[#6d6d6d]">{m}</button>
      ))}
    </div>
    <div className="flex gap-px pt-px text-[#8a99aa]">
      <button aria-label="Minimize chart" className="w-[23px] h-[27px] flex justify-center items-center bg-[#dcebfa] border border-[#a5b6c8]"><span className="w-1.5 h-[2px] mt-1.5 bg-[#8a99aa]" /></button>
      <button aria-label="Restore chart" className="w-[23px] h-[27px] flex justify-center items-center bg-[#dcebfa] border border-[#a5b6c8]">
        <svg viewBox="0 0 9 9" className="w-[9px] h-[9px]" fill="none" stroke="currentColor"><path d="M3 3V1h5v4H6" /><path d="M1 4h5v4H1z" /></svg>
      </button>
      <button aria-label="Close chart" className="w-[23px] h-[27px] flex justify-center items-center bg-[#dcebfa] border border-[#a5b6c8]">
        <svg viewBox="0 0 8 8" className="w-2 h-2" stroke="currentColor" strokeWidth="2"><path d="M1 1l6 6M7 1L1 7" /></svg>
      </button>
    </div>
  </nav>
);

const ScrollBar = () => (
  <div className="h-[23px] flex items-center justify-between px-2 bg-[#ededed] border-t border-white">
    <button aria-label="Scroll left"><svg viewBox="0 0 5 8" className="w-[5px] h-2"><path d="M5 0v8L0 4z" fill="#333" /></svg></button>
    <div className="flex items-center gap-[11px]">
      <button aria-label="Scroll thumb" className="w-[18px] h-[18px] flex justify-center items-center gap-[2px] border border-gray-500 rounded-xs bg-linear-to-b from-gray-50 to-gray-300">
        <i className="w-px h-2 bg-gray-600" /><i className="w-px h-2 bg-gray-600" /><i className="w-px h-2 bg-gray-600" />
      </button>
      <button aria-label="Scroll right"><svg viewBox="0 0 5 8" className="w-[5px] h-2"><path d="M0 0v8l5-4z" fill="#333" /></svg></button>
    </div>
  </div>
);

const tabs = [
  "STOX_TF60", "STOX_TF120", "STOX TF240", "STOX _100", "STOX_TF30", "FIB_TF60", "FIB_TF120", "FIB TF240", "FIB_100",
  "FIB_TF30", "BUND vs STOXX", "FIB Frame bassi", "FIB Giornaliero", "STOXX frame bassi", "STOXX giornaliero", "ANNUALE Indici", "No PREZZI",
];

const Tabs = () => (
  <div className="h-[18px] flex bg-[#f0f0f0] border-t border-black shadow-[inset_0_-1px_0_#a0a0a0]">
    {["M7 0v8L3 4zM1 0h1v8H1z", "M6 0v8L2 4z", "M2 0v8l4-4z", "M1 0v8l4-4zM6 0h1v8H6z"].map((d) => (
      <button key={d} aria-label="Scroll tabs" className="w-[17px] h-[17px] flex justify-center items-center border border-gray-400 bg-[#f0f0f0]">
        <svg viewBox="0 0 8 8" className="w-2 h-2"><path d={d} fill="#555" /></svg>
      </button>
    ))}
    {tabs.map((t) => (
      <button key={t} className={"relative h-4 flex items-center border-b border-black text-xs leading-4 whitespace-nowrap " + (t === "FIB Giornaliero" ? "bg-white font-bold" : "")}>
        <svg viewBox="0 0 6 16" className="w-1.5 h-4"><path d="M0 0l5 16" stroke="#000" fill="none" /></svg>
        <span className="pl-2 pr-[7px]">{t}</span>
      </button>
    ))}
    <svg viewBox="0 0 6 16" className="w-1.5 h-4"><path d="M5 0L0 16" stroke="#000" fill="none" /></svg>
  </div>
);

const StatusBar = () => (
  <footer className="h-[21px] flex items-center justify-between pl-0.5 pr-1 pt-px bg-[#f0eceb] border-b border-[#4a5a78] font-['Open_Sans',sans-serif] text-sm leading-5 whitespace-nowrap">
    <span>For Help, press F1</span>
    <div className="flex items-center divide-x divide-gray-300">
      {["Acct:", "Open Psns:", "DT BP:", "Purch Pwr:", "Closed P/L:", "RT TE:", "Open P/L:"].map((s) => (
        <span key={s} className="pl-1 pr-[15px]">{s}</span>
      ))}
      <button className="px-1 text-[#148a14]">ORDER BAR</button>
      <button className="px-1 text-[#148a14]">MACROS</button>
      <span className="px-1">
        <svg viewBox="0 0 12 12" className="w-3 h-3"><circle cx="6" cy="6" r="5" fill="#c00" stroke="#300" /><circle cx="4" cy="4" r="1.500" fill="#f99" /></svg>
      </span>
      <span className="pl-1">18/02/2022 14:18</span>
    </div>
  </footer>
);

const App = () => (
  <div className="w-full min-h-screen overflow-hidden bg-[#c8d4e4] font-['Liberation_Sans',Arial,sans-serif]">
    <TitleBar />
    <MenuBar />
    <Toolbar />
    <main className="bg-black border-x-2 border-l-[#808080] border-r-[#e0e0e0]">
      <PricePane />
      <LeoPane />
      <CciPane />
      <TimeAxis />
    </main>
    <ScrollBar />
    <Tabs />
    <StatusBar />
  </div>
);

export default App;
